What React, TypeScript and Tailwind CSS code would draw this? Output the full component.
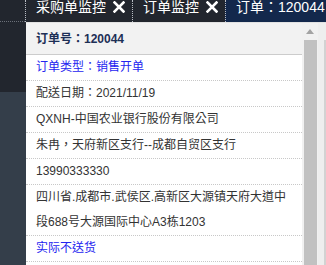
import { FC } from 'react';

const font = { fontFamily: '"Liberation Sans", Arial, "Noto Sans CJK TC", "Noto Sans CJK SC", sans-serif' };

const CloseIcon: FC = () => (
  <svg width="12" height="12" viewBox="0 0 12 12" className="shrink-0">
    <path d="M1.5 1.5 L10.5 10.5 M10.5 1.5 L1.5 10.5" stroke="#fff" strokeWidth="2.6" strokeLinecap="square" />
  </svg>
);

type TabProps = { label: string; closable?: boolean; active?: boolean };

const Tab: FC<TabProps> = ({ label, closable, active }) => (
  <div
    className={`flex h-full items-start shrink-0 border-l border-dotted border-[#b8bcc4] pl-[10px] ${
      active ? 'bg-[#13284c] pr-2 flex-1' : 'pr-[7px]'
    }`}
  >
    <span className="text-[14px] leading-[14px] text-white whitespace-nowrap">{label}</span>
    {closable && (
      <span className="ml-[7px] mt-[1px]">
        <CloseIcon />
      </span>
    )}
  </div>
);

const rows: { text: string; blue?: boolean }[] = [
  { text: '订单类型：销售开单', blue: true },
  { text: '配送日期：2021/11/19' },
  { text: 'QXNH-中国农业银行股份有限公司' },
  { text: '朱冉，天府新区支行--成都自贸区支行' },
  { text: '13990333330' },
  { text: '四川省.成都市.武侯区.高新区大源镇天府大道中段688号大源国际中心A3栋1203' },
  { text: '实际不送货', blue: true },
];

export default function App() {
  return (
    <div className="w-[326px] h-[265px] overflow-hidden bg-[#22262e] flex flex-col" style={font}>
      {/* tab bar */}
      <div className="h-[22px] flex shrink-0 overflow-hidden">
        <div className="w-[25px] shrink-0 border-b border-dotted border-[#6b7079]" />
        <Tab label="采购单监控" closable />
        <Tab label="订单监控" closable />
        <Tab label="订单：120044" active />
      </div>

      <div className="flex flex-1 min-h-0">
        {/* sidebar */}
        <div className="w-[26px] flex flex-col shrink-0">
          <div className="h-[70px] bg-[#22262e]" />
          <div className="flex-1 bg-[#343e4a]" />
        </div>

        {/* detail panel */}
        <div className="w-[276px] shrink-0 bg-white border-t border-[#e2e2e2] flex flex-col">
          <div className="h-[32px] bg-[#f2f2f2] border-b border-[#cccccc] flex items-center pl-[10px] text-[12px] font-bold text-[#1d2f56] shrink-0">
            订单号：120044
          </div>
          {rows.map((r) => (
            <div
              key={r.text}
              className={`px-[10px] text-[12px] leading-[25px] border-b border-dotted border-[#c8c8c8] shrink-0 ${
                r.blue ? 'text-[#2424f0]' : 'text-[#333333]'
              }`}
            >
              {r.text}
            </div>
          ))}
        </div>

        {/* scrollbar */}
        <div className="w-[16px] bg-[#f1f1f1] border-t border-[#e2e2e2] flex flex-col items-center shrink-0">
          <div className="h-[17px] flex items-center justify-center">
            <div className="w-0 h-0 border-l-[4px] border-r-[4px] border-b-[5px] border-l-transparent border-r-transparent border-b-[#a3a3a3]" />
          </div>
          <div className="w-[13px] flex-1 bg-[#c1c1c1]" />
        </div>

        {/* outer gutter */}
        <div className="flex-1 bg-[#eeeeee] flex justify-end border-t border-[#e2e2e2]">
          <div className="w-[2px] mt-[17px] bg-[#d2d2d2]" />
        </div>
      </div>
    </div>
  );
}
